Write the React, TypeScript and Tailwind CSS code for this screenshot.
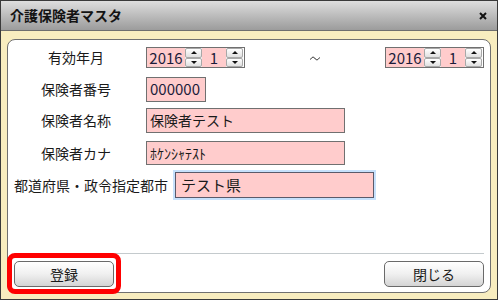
const font = "font-['Noto_Sans_CJK_JP','Noto_Sans',sans-serif]";

function Spinner() {
  return (
    <div className="flex w-[17px] flex-col bg-[#f2f2f2]">
      <div className="flex h-1/2 items-center justify-center rounded-[2px] border border-[#a8a8a8] bg-gradient-to-b from-white to-[#e0e0e0]">
        <svg width="6" height="3" viewBox="0 0 6 3">
          <path d="M3 0 L6 3 L0 3 Z" fill="#111" />
        </svg>
      </div>
      <div className="flex h-1/2 items-center justify-center rounded-[2px] border border-[#a8a8a8] bg-gradient-to-b from-white to-[#e0e0e0]">
        <svg width="6" height="3" viewBox="0 0 6 3">
          <path d="M0 0 L6 0 L3 3 Z" fill="#111" />
        </svg>
      </div>
    </div>
  );
}

function YearMonth() {
  return (
    <div className="flex h-[21px] w-[99px] border border-[#707070] text-[15px] leading-none text-[#1c1c3a]">
      <div className="flex w-[38px] items-center justify-center bg-[#ffcccc]">2016</div>
      <Spinner />
      <div className="flex w-[24px] items-center justify-center bg-[#ffcccc]">1</div>
      <Spinner />
    </div>
  );
}

function Label({ children }: { children: React.ReactNode }) {
  return <div className="w-[136px] text-center text-[14px] text-[#1a1a1a]">{children}</div>;
}

function Btn({ children }: { children: React.ReactNode }) {
  return (
    <button className="flex h-[26px] w-[100px] items-center justify-center rounded-[5px] border border-[#6a6a6a] bg-gradient-to-b from-white via-[#f0f0f0] to-[#d4d4d4] text-[14px] text-[#1a1a1a]">
      {children}
    </button>
  );
}

export default function App() {
  return (
    <div className={`flex h-[300px] w-[498px] flex-col border border-[#3a3a3a] bg-[#f8edbf] ${font}`}>
      {/* title bar */}
      <div className="flex h-[30px] items-center justify-between border-b border-[#6e6e6e] bg-gradient-to-b from-[#dedede] to-[#9c9c9c] pl-[9px] pr-[10px]">
        <span className="text-[14px] font-bold text-[#141414]">介護保険者マスタ</span>
        <svg width="8" height="8" viewBox="0 0 8 8">
          <path d="M1 1 L7 7 M7 1 L1 7" stroke="#111" strokeWidth="2" />
        </svg>
      </div>

      {/* panel */}
      <div className="mx-[6px] mb-[6px] mt-[8px] flex flex-1 flex-col rounded-[8px] border border-[#707070] bg-white">
        <div className="flex flex-col pt-[7px]">
          <div className="flex h-[21px] items-center">
            <Label>有効年月</Label>
            <div className="ml-[2px]">
              <YearMonth />
            </div>
            <div className="flex w-[140px] justify-center pt-[2px]">
              <svg width="10" height="5" viewBox="0 0 10 5">
                <path d="M0.5 3.5 C2 0.5 4 0.8 5 2.5 C6 4.2 8 4.5 9.5 1.5" stroke="#1a1a1a" strokeWidth="1" fill="none" />
              </svg>
            </div>
            <YearMonth />
          </div>

          <div className="mt-[9px] flex h-[25px] items-center">
            <Label>保険者番号</Label>
            <div className="ml-[2px] flex h-full w-[60px] items-center border border-[#707070] bg-[#ffcccc] pl-[3px] text-[15px] text-[#1c1c3a]">
              000000
            </div>
          </div>

          <div className="mt-[6px] flex h-[25px] items-center">
            <Label>保険者名称</Label>
            <div className="ml-[2px] flex h-full w-[199px] items-center border border-[#707070] bg-[#ffcccc] pl-[3px] text-[14px] text-[#1a1a1a]">
              保険者テスト
            </div>
          </div>

          <div className="mt-[8px] flex h-[24px] items-center">
            <Label>保険者カナ</Label>
            <div className="ml-[2px] flex h-full w-[199px] items-center border border-[#707070] bg-[#ffcccc] pl-[3px] text-[14px] text-[#1a1a1a]">
              ﾎｹﾝｼｬﾃｽﾄ
            </div>
          </div>

          <div className="mt-[7px] flex h-[26px] items-center">
            <div className="pl-[6px] text-[14px] text-[#1a1a1a]">都道府県・政令指定都市</div>
            <div className="ml-[7px] flex h-full w-[199px] items-center border border-[#5a5a6a] bg-[#ffcccc] pl-[5px] text-[15px] text-[#1a1a1a] shadow-[0_0_0_2px_rgba(160,205,250,0.6)]">
              テスト県
            </div>
          </div>
        </div>

        {/* footer */}
        <div className="mt-auto">
          <div className="mx-[6px] h-px bg-[#c4cacd]" />
          <div className="flex justify-between px-[6px] pb-[5px] pt-[7px]">
            <div className="relative">
              <Btn>登録</Btn>
              <div className="absolute -bottom-[7px] -left-[7px] -right-[7px] -top-[8px] rounded-[8px] border-[5px] border-[#ff0000]" />
            </div>
            <Btn>閉じる</Btn>
          </div>
        </div>
      </div>
    </div>
  );
}
